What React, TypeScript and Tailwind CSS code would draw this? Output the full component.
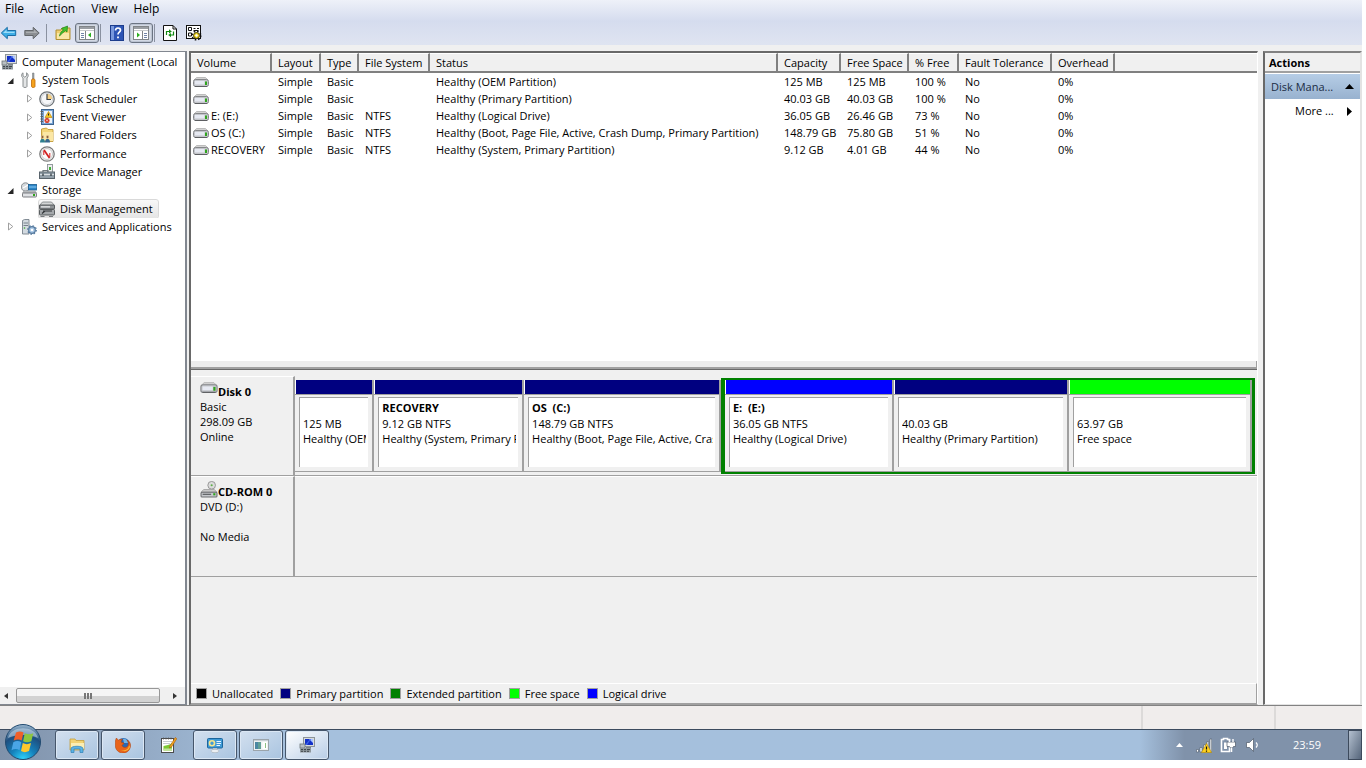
import type { ReactNode } from "react";

type IconName =
  | "computer" | "tools" | "clock" | "log" | "share" | "perf" | "device" | "storage" | "disk" | "services";

function Svg({ children, className = "h-4 w-4" }: { children: ReactNode; className?: string }) {
  return (
    <svg viewBox="0 0 16 16" className={`shrink-0 ${className}`} aria-hidden="true">
      {children}
    </svg>
  );
}

function ComputerIcon({ className }: { className?: string }) {
  return (
    <Svg className={className}>
      <rect x="4.5" y=".5" width="11" height="9" fill="#d8dcdf" stroke="#8d9499" />
      <rect x="6" y="2" width="8" height="6" fill="#1230c8" />
      <path d="M10 2h4v4z" fill="#a9c4ff" />
      <path d="M6 8l5-6h1L8 8z" fill="#3c62e8" />
      <rect x="7" y="10" width="5" height="1.5" fill="#7d858a" />
      <rect x="1" y="7" width="5" height="4" fill="#b9c0c4" stroke="#6d7478" strokeWidth=".8" />
      <rect x="1" y="11" width="11" height="4.5" fill="#8f989d" />
      <path d="M2 12.5h2M5 12.5h2M8 12.5h3M2 14.3h2M5 14.3h2M8 14.3h2" stroke="#3f474c" />
    </Svg>
  );
}

function DriveIcon({ className = "h-3 w-4" }: { className?: string }) {
  return (
    <svg viewBox="0 0 16 12" className={`shrink-0 ${className}`} aria-hidden="true">
      <path d="M3.5 1.5h9l2.500 2.500H1z" fill="#d3d3d3" stroke="#b0b0b0" strokeWidth=".8" />
      <rect x=".5" y="3.5" width="15" height="7" rx="2" fill="#c3c5ca" stroke="#85878a" />
      <path d="M2 5h9.500v3.500H2z" fill="#e6e9f2" />
      <rect x="12" y="5.5" width="2" height="3.500" fill="#2fa51c" />
      <path d="M2 10.500h12" stroke="#5d5f62" />
    </svg>
  );
}

function TreeIcon({ name }: { name: IconName }) {
  switch (name) {
    case "computer":
      return <ComputerIcon />;
    case "tools":
      return (
        <Svg>
          <path d="M2 .8v3l1.800 1.400L5.600 3.800V.8C7.500 1.800 7.800 4.500 6 6v8.500c0 1.300-4 1.300-4 0V6C0 4.500.3 1.800 2 .8z" fill="#e3e5e6" stroke="#7d8285" strokeWidth=".9" />
          <path d="M11.500 1h1.500v6h-1.500z" fill="#9ea4a8" stroke="#6c7275" strokeWidth=".5" />
          <path d="M10.500 8c0-1.500 3.500-1.500 3.500 0v6.500c0 1.300-3.500 1.300-3.500 0z" fill="#f4a21d" stroke="#c06a08" strokeWidth=".8" />
        </Svg>
      );
    case "clock":
      return (
        <Svg>
          <circle cx="8" cy="8" r="7.200" fill="#f6f7f9" stroke="#6f7479" strokeWidth="1.300" />
          <path d="M8 8V2.500A5.500 5.500 0 0 1 13.500 8z" fill="#f5cf83" />
          <circle cx="8" cy="8" r="5.600" fill="none" stroke="#c3c8cd" strokeWidth=".8" />
          <path d="M8 3v5.500h4" fill="none" stroke="#3c4146" strokeWidth="1.200" />
        </Svg>
      );
    case "log":
      return (
        <Svg>
          <rect x="2.500" y=".5" width="12" height="15" fill="#7aa5d6" stroke="#3e658f" />
          <rect x="5" y="2" width="8" height="12" fill="#eef4fa" />
          <path d="M1.500 2.500h2.500M1.500 5h2.500M1.500 7.500h2.500M1.500 10h2.500M1.500 12.500h2.500" stroke="#5c5c5c" />
          <path d="M9.500 2.500l3.500 6H6z" fill="#f8c41c" stroke="#b27c00" strokeWidth=".6" />
          <path d="M9.500 4.500v2" stroke="#222" />
          <circle cx="8" cy="11.500" r="2.500" fill="#d2301e" />
          <path d="M7 10.500l2 2M9 10.500l-2 2" stroke="#fff" strokeWidth=".7" />
        </Svg>
      );
    case "share":
      return (
        <Svg>
          <path d="M2.500 2l5-1 1.500 1.500h5v12h-11.500z" fill="#f4d67a" stroke="#c29a35" strokeWidth=".9" />
          <path d="M4 5h10v9H4z" fill="#fbe7a5" />
          <path d="M1 15.500c0-5 5-5 5 0z" fill="#2d7f8f" />
          <path d="M6 15.500c0-5 5-5 5 0z" fill="#35678e" />
          <circle cx="3.500" cy="10" r="1.400" fill="#8a5a35" stroke="#f7e2b0" strokeWidth=".5" />
          <circle cx="8.500" cy="10" r="1.400" fill="#8a5a35" stroke="#f7e2b0" strokeWidth=".5" />
        </Svg>
      );
    case "perf":
      return (
        <Svg>
          <circle cx="8" cy="8" r="7.200" fill="#fbfbfb" stroke="#7a7a7a" strokeWidth="1.300" />
          <circle cx="8" cy="8" r="5.500" fill="none" stroke="#bdbdbd" strokeWidth=".8" />
          <path d="M5 4l5.500 8" stroke="#d21f1f" strokeWidth="1.800" />
          <path d="M4.800 9V5M10.800 11V7" stroke="#d21f1f" strokeWidth="1" />
        </Svg>
      );
    case "device":
      return (
        <Svg>
          <rect x="8.500" y=".5" width="5" height="8" fill="#eceeee" stroke="#8a9094" strokeWidth=".9" />
          <rect x="10" y="3" width="2" height="3" fill="#3fae36" />
          <path d="M4 8V6.500h5V8" fill="none" stroke="#6e777d" strokeWidth="1.200" />
          <rect x=".5" y="8" width="15" height="6.500" fill="#93a0aa" stroke="#59646c" />
          <path d="M1 10.500h14" stroke="#d9dfe3" />
          <path d="M4 9.500v2.500M12 9.500v2.500" stroke="#3e484f" strokeWidth="1.400" />
        </Svg>
      );
    case "storage":
      return (
        <Svg>
          <circle cx="4.500" cy="5" r="4.200" fill="#d5d9dc" stroke="#7e8589" strokeWidth=".9" />
          <path d="M2 6l5-3" stroke="#fff" strokeWidth="1.200" />
          <rect x="7.500" y="2.500" width="8" height="5.500" fill="#2e86c8" stroke="#155a8e" strokeWidth=".8" />
          <path d="M8 5h7.500" stroke="#8ccbf2" />
          <path d="M3 9h11l1.500 2H1.500z" fill="#c8cbcd" stroke="#8d9194" strokeWidth=".6" />
          <rect x="1.500" y="11" width="14" height="4" rx=".8" fill="#e0e2e5" stroke="#6f7376" strokeWidth=".9" />
          <rect x="12" y="12" width="2" height="2" fill="#2fa51c" />
        </Svg>
      );
    case "disk":
      return (
        <Svg>
          <path d="M3.500 1h9L15.500 4.500H.5z" fill="#d3d5d6" stroke="#797d80" strokeWidth=".8" />
          <rect x=".5" y="4" width="15" height="4" rx=".6" fill="#8f9396" stroke="#4d5154" strokeWidth=".9" />
          <rect x="2" y="5.200" width="9" height="1.300" fill="#e6e8e9" />
          <rect x=".5" y="8.500" width="15" height="5.500" rx=".8" fill="#a4a8ab" stroke="#4d5154" strokeWidth=".9" />
          <path d="M4 10h9M3 12.500L6 10" stroke="#33373a" strokeWidth="1.200" />
          <path d="M1.500 15.500h4M10 15.500h4" stroke="#777b7e" />
        </Svg>
      );
    case "services":
      return (
        <Svg>
          <path d="M1.500 1.500l2-1h4.500v14.500h-6.500z" fill="#d3dae0" stroke="#77828b" strokeWidth=".9" />
          <path d="M2.500 4h4.500M2.500 6.500h4.500" stroke="#77828b" />
          <circle cx="3.500" cy="9" r=".8" fill="#38a32c" />
          <circle cx="11" cy="11" r="3.300" fill="#a8c6e4" stroke="#54799e" strokeWidth="1.200" />
          <circle cx="11" cy="11" r="4.300" fill="none" stroke="#54799e" strokeWidth="1.200" strokeDasharray="1.500 1.870" />
          <circle cx="11" cy="11" r="1.300" fill="#fff" />
        </Svg>
      );
  }
}

function Twisty({ state }: { state?: "open" | "closed" }) {
  return (
    <svg viewBox="0 0 8 9" className="h-[9px] w-2 shrink-0" aria-hidden="true">
      {state === "open" && <path d="M6.500 2v6h-6z" fill="#262626" />}
      {state === "closed" && <path d="M1.500 1v7L5.800 4.500z" fill="#fff" stroke="#a0a0a0" />}
    </svg>
  );
}

const TREE: { label: string; icon: IconName; level: 0 | 1 | 2; state?: "open" | "closed"; selected?: boolean }[] = [
  { label: "Computer Management (Local", icon: "computer", level: 0 },
  { label: "System Tools", icon: "tools", level: 1, state: "open" },
  { label: "Task Scheduler", icon: "clock", level: 2, state: "closed" },
  { label: "Event Viewer", icon: "log", level: 2, state: "closed" },
  { label: "Shared Folders", icon: "share", level: 2, state: "closed" },
  { label: "Performance", icon: "perf", level: 2, state: "closed" },
  { label: "Device Manager", icon: "device", level: 2 },
  { label: "Storage", icon: "storage", level: 1, state: "open" },
  { label: "Disk Management", icon: "disk", level: 2, selected: true },
  { label: "Services and Applications", icon: "services", level: 1, state: "closed" },
];

const INDENT = { 0: "pl-px", 1: "pl-[7px]", 2: "pl-[26px]" };

const COLUMNS = [
  { label: "Volume", width: "w-[81px]" },
  { label: "Layout", width: "w-[49px]" },
  { label: "Type", width: "w-[38px]" },
  { label: "File System", width: "w-[71px]" },
  { label: "Status", width: "w-[348px]" },
  { label: "Capacity", width: "w-[63px]" },
  { label: "Free Space", width: "w-[68px]" },
  { label: "% Free", width: "w-[50px]" },
  { label: "Fault Tolerance", width: "w-[93px]" },
  { label: "Overhead", width: "w-[63px]" },
];

const VOLUMES = [
  ["", "Simple", "Basic", "", "Healthy (OEM Partition)", "125 MB", "125 MB", "100 %", "No", "0%"],
  ["", "Simple", "Basic", "", "Healthy (Primary Partition)", "40.03 GB", "40.03 GB", "100 %", "No", "0%"],
  ["E: (E:)", "Simple", "Basic", "NTFS", "Healthy (Logical Drive)", "36.05 GB", "26.46 GB", "73 %", "No", "0%"],
  ["OS (C:)", "Simple", "Basic", "NTFS", "Healthy (Boot, Page File, Active, Crash Dump, Primary Partition)", "148.79 GB", "75.80 GB", "51 %", "No", "0%"],
  ["RECOVERY", "Simple", "Basic", "NTFS", "Healthy (System, Primary Partition)", "9.12 GB", "4.01 GB", "44 %", "No", "0%"],
];

const LEGEND = [
  { label: "Unallocated", color: "bg-black" },
  { label: "Primary partition", color: "bg-[#000080]" },
  { label: "Extended partition", color: "bg-[#008000]" },
  { label: "Free space", color: "bg-[#00ff00]" },
  { label: "Logical drive", color: "bg-[#0000ff]" },
];

function ToolSeparator() {
  return <span className="h-[18px] w-px bg-[#8a91a0]" />;
}

function PaneIcon({ side }: { side: "left" | "right" }) {
  return (
    <Svg>
      <rect x=".5" y="1.500" width="15" height="13" fill="#fff" stroke="#808488" />
      <path d="M1 3h14" stroke="#9a9ea3" strokeWidth="2" />
      <path d="M1 5.500h14" stroke="#c7cacd" />
      {side === "left" ? (
        <>
          <path d="M6.500 6v8" stroke="#808488" />
          <path d="M2 8.500h3M2 10.500h3M2 12.500h3" stroke="#7385a8" />
          <path d="M12 7.500v5L9 10z" fill="#2cae1f" />
        </>
      ) : (
        <>
          <path d="M9.500 6v8" stroke="#808488" />
          <path d="M11 8.500h3M11 10.500h3M11 12.500h3" stroke="#7385a8" />
          <path d="M4 7.500v5L7 10z" fill="#2cae1f" />
        </>
      )}
    </Svg>
  );
}

function Toolbar() {
  const pressed = "flex h-5 w-6 items-center justify-center rounded-[3px] border border-[#6b7482] bg-[#d3d9e4] shadow-[inset_0_0_0_1px_#bcc4d2]";
  return (
    <div className="flex h-6 shrink-0 items-center bg-linear-to-b from-[#d5dcee] to-[#dfe4f1]">
      <button aria-label="Back" className="w-[17px]">
        <Svg className="h-4 w-[17px]">
          <path d="M.8 8l6-5.700v3.200h8.400v5H6.800v3.200z" fill="#3eaee6" stroke="#1b6da5" />
          <path d="M2.500 8l3.500-3.300v2h8V8z" fill="#9ddcf8" />
        </Svg>
      </button>
      <button aria-label="Forward" className="ml-[7px] w-4">
        <Svg>
          <path d="M15.200 8l-6-5.700v3.200H.8v5h8.400v3.200z" fill="#8b8e92" stroke="#65686c" />
          <path d="M2 6.700h8v-2L13.500 8H2z" fill="#abaeb1" />
        </Svg>
      </button>
      <span className="ml-[6px] flex"><ToolSeparator /></span>
      <button aria-label="Up one level" className="ml-2">
        <Svg>
          <path d="M1 5h5l1-2h8v11.500H1z" fill="#efcf70" stroke="#b18f32" />
          <path d="M2 8h12v6H2z" fill="#f9e7a6" />
          <path d="M4.500 11c.5-3 2-5 4-6L6.500 3.500 12.500 1 12 7 10.300 5.800C8 7.500 6.500 9 4.500 11z" fill="#43c22c" stroke="#1d8414" strokeWidth=".7" />
        </Svg>
      </button>
      <button aria-label="Show or hide console tree" className={`ml-1 ${pressed}`}><PaneIcon side="left" /></button>
      <span className="ml-px flex"><ToolSeparator /></span>
      <button aria-label="Help" className="ml-2">
        <Svg>
          <rect x="1.500" y=".5" width="13" height="15" fill="#2d55b5" stroke="#1d3d8c" />
          <path d="M2 1h3v14H2z" fill="#7898dd" />
          <path d="M6.500 5.500c0-3.300 5-3.300 5-.3 0 2-2.500 2-2.500 4.300" fill="none" stroke="#fff" strokeWidth="1.700" />
          <path d="M8.100 11.500h1.800v1.800H8.100z" fill="#fff" />
        </Svg>
      </button>
      <button aria-label="Show or hide action pane" className={`ml-1 ${pressed}`}><PaneIcon side="right" /></button>
      <span className="ml-px flex"><ToolSeparator /></span>
      <button aria-label="Refresh" className="ml-[7px]">
        <Svg>
          <path d="M1.500.5h9.500l3.500 3.500v11.500h-13z" fill="#fff" stroke="#111" />
          <path d="M11 .5V4h3.500" fill="none" stroke="#111" />
          <path d="M4.500 10V6.500h3M11.500 6.500v3.500h-3" fill="none" stroke="#118a11" strokeWidth="1.200" />
          <path d="M7 4.300v4.200l2.800-2.100zM9 8v4.200l-2.800-2.100z" fill="#118a11" />
        </Svg>
      </button>
      <button aria-label="Settings" className="ml-2">
        <Svg>
          <rect x=".5" y=".5" width="14" height="13" fill="#fff" stroke="#111" />
          <path d="M2.500 2.500h3v3h-3zM2.500 8h3v3h-3z" fill="#fff" stroke="#111" />
          <path d="M7.500 3.500h2M11 3.500h2M7.500 5.500h5" stroke="#111" strokeWidth="1.200" />
          <circle cx="10.500" cy="10.500" r="3" fill="#e9cf1a" stroke="#4d4300" />
          <circle cx="10.500" cy="10.500" r="4.300" fill="none" stroke="#111" strokeWidth="1.500" strokeDasharray="1.600 1.780" />
          <circle cx="10.500" cy="10.500" r="1.200" fill="#fff" />
        </Svg>
      </button>
    </div>
  );
}

function ConsoleTree() {
  return (
    <nav aria-label="Console tree" className="flex w-[187px] shrink-0 flex-col border-t border-r-2 border-b border-[#828790] bg-white">
      <ul className="grid h-[184px] shrink-0 grid-rows-10 pt-px">
        {TREE.map((item) => (
          <li key={item.label} className={`flex items-center overflow-hidden whitespace-nowrap ${INDENT[item.level]}`}>
            {item.level > 0 && <Twisty state={item.state} />}
            <button
              className={`flex h-[18px] items-center gap-[5px] ${item.level === 0 ? "" : item.level === 1 ? "ml-[6px]" : "ml-[5px]"} ${
                item.selected ? "rounded-[2px] bg-linear-to-b from-[#f8f8f8] to-[#e5e5e5] pr-[5px] outline outline-[#d9d9d9]" : ""
              }`}
            >
              <TreeIcon name={item.icon} />
              {item.label}
            </button>
          </li>
        ))}
      </ul>
      <div className="grow" />
      <div className="flex h-[17px] items-center bg-[#f0f0f0]">
        <button aria-label="Scroll left" className="flex w-4 justify-center pr-1">
          <svg viewBox="0 0 4 6" className="h-[6px] w-1"><path d="M4 0v6L0 3z" fill="#333" /></svg>
        </button>
        <div className="flex h-[15px] w-[144px] items-center justify-center gap-px rounded-[2px] border border-[#979797] bg-linear-to-b from-[#f5f5f5] from-50% to-[#d2d2d2] to-50%">
          <span className="h-[6px] w-[2px] bg-[#777]" />
          <span className="h-[6px] w-[2px] bg-[#777]" />
          <span className="h-[6px] w-[2px] bg-[#777]" />
        </div>
        <button aria-label="Scroll right" className="flex grow justify-center pl-1">
          <svg viewBox="0 0 4 6" className="h-[6px] w-1"><path d="M0 0v6l4-3z" fill="#333" /></svg>
        </button>
      </div>
    </nav>
  );
}

function VolumeList() {
  return (
    <div className="h-[308px] shrink-0 overflow-hidden bg-white">
      <table className="w-full table-fixed border-separate border-spacing-0">
        <thead>
          <tr className="h-5 bg-[#f0f0f0]">
            {COLUMNS.map((c) => (
              <th key={c.label} className={`${c.width} border-t border-r-2 border-b-2 border-t-white border-r-[#808080] border-b-[#808080] p-0 pl-[6px] text-left align-middle font-normal whitespace-nowrap`}>
                {c.label}
              </th>
            ))}
            <th aria-label="Filler" className="border-t border-b-2 border-t-white border-b-[#808080] p-0" />
          </tr>
        </thead>
        <tbody>
          {VOLUMES.map((row, i) => (
            <tr key={i} className="h-[17px]">
              {row.map((cell, j) => (
                <td key={j} className={`p-0 leading-[17px] whitespace-nowrap ${j === 0 ? "pl-[2px]" : "pl-[6px]"}`}>
                  {j === 0 ? (
                    <span className="flex items-center gap-[2px]"><DriveIcon />{cell}</span>
                  ) : cell}
                </td>
              ))}
              <td className="p-0" />
            </tr>
          ))}
        </tbody>
      </table>
    </div>
  );
}

function Partition({ grow, color, name, size, status }: { grow: string; color: string; name?: string; size: string; status: string }) {
  return (
    <div className={`flex min-w-0 basis-0 flex-col border-r-2 border-b border-[#a0a0a0] ${grow}`}>
      <div className={`h-[14px] shrink-0 border-l border-white ${color}`} />
      <div className="flex grow border-t border-[#a0a0a0] px-1 pt-[2px] pb-1">
        <div className="min-w-0 grow border-t border-l border-[#a0a0a0] bg-white pt-[2px] pr-[2px] pl-[3px] leading-[15px] whitespace-nowrap">
          <div className="overflow-hidden">
            <div className="h-4 font-bold whitespace-pre">{name}</div>
            <div>{size}</div>
            <div>{status}</div>
          </div>
        </div>
      </div>
    </div>
  );
}

function DiskHeader({ icon, title, lines }: { icon: ReactNode; title: string; lines: string[] }) {
  return (
    <div className="w-[104px] shrink-0 border-t border-r-2 border-b border-t-white border-r-[#a0a0a0] border-b-[#a0a0a0] pl-[9px] leading-[15px]">
      <div className="flex h-[22px] items-end font-bold">
        <span className="flex h-[18px] items-start">{icon}</span>
        {title}
      </div>
      {lines.map((line, i) => (
        <div key={i} className="h-[15px]">{line}</div>
      ))}
    </div>
  );
}

function DiskPane() {
  return (
    <div className="flex grow flex-col border-t border-[#696969] bg-[#f0f0f0] pt-[6px]">
      <div className="flex h-[100px]">
        <DiskHeader icon={<DriveIcon className="h-[13px] w-[18px]" />} title="Disk 0" lines={["Basic", "298.09 GB", "Online"]} />
        <div className="flex min-w-0 grow border-b border-[#a0a0a0] pt-[2px] pr-[2px] pb-px">
          <div className="flex min-w-0 grow-[429] basis-0 py-[2px]">
            <Partition grow="grow-[79]" color="bg-[#000080]" size="125 MB" status="Healthy (OEM Partition)" />
            <Partition grow="grow-[151]" color="bg-[#000080]" name="RECOVERY" size="9.12 GB NTFS" status="Healthy (System, Primary Partition)" />
            <Partition grow="grow-[199]" color="bg-[#000080]" name="OS  (C:)" size="148.79 GB NTFS" status="Healthy (Boot, Page File, Active, Crash Dump, Primary Partition)" />
          </div>
          <div className="flex min-w-0 grow-[531] basis-0 border-y-2 border-r-[3px] border-l-4 border-[#008000]">
            <Partition grow="grow-[168]" color="bg-[#0000ff]" name="E:  (E:)" size="36.05 GB NTFS" status="Healthy (Logical Drive)" />
            <Partition grow="grow-[174]" color="bg-[#000080]" size="40.03 GB" status="Healthy (Primary Partition)" />
            <Partition grow="grow-[182]" color="bg-[#00ff00]" size="63.97 GB" status="Free space" />
          </div>
        </div>
      </div>
      <div className="flex h-[101px]">
        <DiskHeader
          icon={
            <Svg className="mb-auto h-[17px] w-[18px]">
              <circle cx="10.500" cy="4" r="3.600" fill="#dcdcdc" stroke="#8b8b8b" strokeWidth=".8" />
              <circle cx="10.500" cy="4" r="1" fill="#5fae4a" />
              <path d="M3 8h10l2.500 2.500H.5z" fill="#c9c9c9" stroke="#9a9a9a" strokeWidth=".7" />
              <rect x=".5" y="10.500" width="15" height="4.500" rx="1" fill="#c6c8cc" stroke="#6c6e71" />
              <path d="M2 12.500h8" stroke="#4e5053" />
              <rect x="12" y="11.500" width="2" height="2" fill="#2fa51c" />
            </Svg>
          }
          title="CD-ROM 0"
          lines={["DVD (D:)", "", "No Media"]}
        />
        <div className="grow border-y border-t-white border-b-[#a0a0a0]" />
      </div>
      <div className="grow" />
      <ul className="flex h-[21px] items-center gap-[7px] border-t border-r border-b border-t-white border-r-[#a0a0a0] border-b-[#a0a0a0] pl-[5px]">
        {LEGEND.map((item) => (
          <li key={item.label} className="flex items-center gap-[5px]">
            <span className={`h-[11px] w-[11px] border border-[#a0a0a0] ${item.color}`} />
            {item.label}
          </li>
        ))}
      </ul>
    </div>
  );
}

function ActionsPane() {
  return (
    <aside className="ml-[5px] w-[99px] shrink-0 border-t-2 border-r-2 border-b border-l-2 border-t-[#828282] border-r-[#e3e3e3] border-b-[#e3e3e3] border-l-[#696969] bg-white">
      <h2 className="h-5 border-b-2 border-[#a0a0a0] bg-[#f0f0f0] pl-1 leading-[20px] font-bold">Actions</h2>
      <button className="mt-px flex h-[25px] w-full items-center justify-between bg-linear-to-b from-[#b6cde6] to-[#98b2cf] px-[6px] text-[#1b2c44]">
        Disk Mana...
        <svg viewBox="0 0 9 5" className="h-[5px] w-[9px]"><path d="M4.500 0L9 5H0z" fill="#000" /></svg>
      </button>
      <button className="flex h-6 w-full items-center justify-between pr-2 pl-[30px]">
        More ...
        <svg viewBox="0 0 5 9" className="h-[9px] w-[5px]"><path d="M0 0v9l5-4.500z" fill="#000" /></svg>
      </button>
    </aside>
  );
}

function TaskButton({ label, active, children }: { label: string; active?: boolean; children: ReactNode }) {
  return (
    <button
      aria-label={label}
      className={`flex h-[30px] w-11 items-center justify-center rounded-[3px] border border-[#46566b] shadow-[inset_0_0_0_1px_#dbe7f4] ${
        active ? "bg-linear-to-br from-white to-[#b8cde6]" : "bg-linear-to-br from-[#d3e0ef] to-[#a9c4e0]"
      }`}
    >
      {children}
    </button>
  );
}

function Taskbar() {
  return (
    <footer className="relative flex h-[31px] shrink-0 items-center border-t border-[#3c4b5e] bg-linear-to-r from-[#8092aa] to-[#a5c0dd] to-20% pl-[55px]">
      <button aria-label="Start" className="absolute bottom-0 left-1">
        <svg viewBox="0 0 38 36" className="h-9 w-[38px]" aria-hidden="true">
          <defs>
            <radialGradient id="orb" cx=".5" cy="1" r="1">
              <stop offset="0" stopColor="#2fd7ff" />
              <stop offset=".35" stopColor="#1583bd" />
              <stop offset=".7" stopColor="#1e4f80" />
              <stop offset="1" stopColor="#9db9d0" />
            </radialGradient>
          </defs>
          <circle cx="19" cy="18" r="17.500" fill="url(#orb)" stroke="#214a70" />
          <path d="M4 14C7 1 31 1 34 14c-8-4-22-4-30 0z" fill="#d8e8f3" opacity=".5" />
          <path d="M12 8.500c3-1.500 5-1.500 7.500 0l-1.800 8c-2.500-1.500-5-1.500-8 0z" fill="#f0602a" />
          <path d="M20.800 9.200c3 1.500 5.500 1.500 8.500 0l-2 8c-3 1.500-5.500 1.500-8.200 0z" fill="#8dc63f" />
          <path d="M9.300 18.200c3-1.500 5.500-1.500 8 0l-1.800 8c-2.500-1.500-5-1.500-8 0z" fill="#4aa5e6" />
          <path d="M18.800 19c3 1.500 5.200 1.500 8.200 0l-2 8c-3 1.500-5.500 1.500-8 0z" fill="#fcc72e" />
        </svg>
      </button>
      <div className="flex items-center gap-[2px]">
        <TaskButton label="Windows Explorer">
          <Svg>
            <path d="M1 2h5l1 1.500h8V13H1z" fill="#f2d373" stroke="#c59f3c" strokeWidth=".8" />
            <path d="M2 6h13v6H2z" fill="#fbeeb4" />
            <path d="M2 15.500v-4c0-3 12-3 12 0v4h-3v-3.500H5v3.500z" fill="#5cb3e4" stroke="#2f81b8" strokeWidth=".7" />
          </Svg>
        </TaskButton>
        <TaskButton label="Firefox">
          <Svg>
            <circle cx="8.500" cy="7.500" r="6.500" fill="#2b68b4" />
            <path d="M8 2c2-.8 5 1 5 4L9 6z" fill="#6fb4e8" />
            <path d="M.6 3l.8-2 2 2.200C5 2 6.500 2 7.500 2.500 6 3.500 6 4.500 6.500 5.500l2.500.5c0 1.500-2 1.500-2 2.500 1 2.500 5 2.500 6 0 .8-2 .3-4-1-5.500 3 1.500 4 4 3.400 7C14.500 14 11.500 16 8 16 3.500 16 .3 12.500.3 8.500.3 6.500.2 4.500.6 3z" fill="#e8641b" stroke="#a83c0a" strokeWidth=".5" />
            <path d="M14 8c0 4-4 6.500-8 5 3 2.300 8 1 9-3z" fill="#f9b733" />
          </Svg>
        </TaskButton>
        <button aria-label="Notepad++" className="flex h-[30px] w-11 items-center justify-center">
          <Svg>
            <rect x=".5" y="1.500" width="12" height="14" fill="#fff" stroke="#4b4b4b" />
            <path d="M2.500 9c3-.5 6-1 8.500-3v7.500H2.500z" fill="#7cc832" />
            <path d="M2.500 11.500H11v2H2.500z" fill="#c3e39a" />
            <path d="M2 4.500h9M2 6.500h7" stroke="#c6cbd0" />
            <path d="M2.500.5v2M5 .5v2M7.500.5v2M10 .5v2" stroke="#555" strokeWidth=".8" />
            <path d="M14.300.5l1.500 1.200L10.500 10l-2 1 .5-2.200z" fill="#f3a620" stroke="#a65a10" strokeWidth=".6" />
          </Svg>
        </button>
        <TaskButton label="Control Panel">
          <Svg>
            <rect x=".5" y="1.500" width="15" height="9.500" rx="1" fill="#3f9ad6" stroke="#1a659c" />
            <circle cx="5" cy="6.200" r="2.500" fill="none" stroke="#f6e58a" strokeWidth="1.600" />
            <path d="M9.500 4.500H14M9.500 6.500H14M9.500 8.500H13" stroke="#e6f4ff" />
            <path d="M6 11h4v2H6z" fill="#b9c3cc" />
            <ellipse cx="8" cy="14" rx="4" ry="1.700" fill="#eceff2" stroke="#9aa4ad" strokeWidth=".5" />
          </Svg>
        </TaskButton>
        <TaskButton label="Application">
          <Svg>
            <rect x=".5" y="2.500" width="15" height="11" fill="#eef1f3" stroke="#9ba4ab" />
            <path d="M1 3.500h14" stroke="#c8d0d6" />
            <rect x="2" y="5" width="6" height="7" fill="#5f9f96" />
            <path d="M2 5h3v7H2z" fill="#4b87a3" />
            <path d="M9.500 5h4.500v7H9.500z" fill="#fff" />
            <path d="M12.500 6v5" stroke="#8dbf85" />
          </Svg>
        </TaskButton>
        <TaskButton label="Computer Management" active><ComputerIcon /></TaskButton>
      </div>
      <div className="ml-auto flex h-full items-center bg-linear-to-r from-[#a5c0dd] to-[#8092aa] to-20% pl-9 text-white">
        <button aria-label="Show hidden icons" className="flex">
          <svg viewBox="0 0 7 4" className="h-1 w-[7px]"><path d="M3.500 0L7 4H0z" fill="#fff" /></svg>
        </button>
        <span className="ml-[13px] flex gap-2">
          <Svg>
            <path d="M.5 12.500h2V15h-2zM4 10.500h2V15H4zM7.500 8h2v7h-2zM11 4.500h1.700V15H11zM14 2h1.700v13H14z" fill="#fff" stroke="#4c5867" strokeWidth=".6" />
            <path d="M10.500 6.500L15.500 15.500h-10z" fill="#ffd21f" stroke="#c08f00" strokeWidth=".6" />
            <path d="M10.500 9.500v3M10.500 13.500v1.200" stroke="#111" strokeWidth="1.200" />
          </Svg>
          <Svg>
            <path d="M1.500 2.500h2v-1h4v1h2v12h-8z" fill="none" stroke="#fff" strokeWidth="1.600" />
            <path d="M4 5.500h3v6.500H4z" fill="#fff" />
            <path d="M7 5h8.500v4.500h-2l-1 1.500h-2L9.500 9.500H7z" fill="#fff" stroke="#4c5867" strokeWidth=".7" />
            <path d="M9.500 2v3M13 2v3" stroke="#fff" strokeWidth="1.400" />
            <path d="M11.500 11v4" stroke="#fff" strokeWidth="1.500" />
          </Svg>
          <Svg>
            <path d="M2.500 5.500h3l4-4v13l-4-4h-3z" fill="#fff" stroke="#4c5867" strokeWidth=".7" />
            <path d="M12 5.500c1.500 1.500 1.500 3.500 0 5" fill="none" stroke="#fff" strokeWidth="1.200" />
          </Svg>
        </span>
        <span className="ml-[33px] w-[55px]">23:59</span>
        <button aria-label="Show desktop" className="h-full w-[14px] border border-[#3d4a5c] bg-linear-to-br from-[#b4c0cf] to-[#56667b]" />
      </div>
    </footer>
  );
}

export default function App() {
  return (
    <div className="h-screen bg-white pr-1 pb-2 font-['Open_Sans','Noto_Sans',sans-serif] text-[11px] leading-[16px] text-black">
      <div className="flex h-full flex-col bg-[#f0f0f0]">
        <header className="flex h-[21px] shrink-0 items-center gap-4 bg-linear-to-b from-[#eef1f9] to-[#d5dcee] pb-[3px] pl-[5px] text-xs">
          <button>File</button>
          <button>Action</button>
          <button>View</button>
          <button>Help</button>
        </header>
        <Toolbar />
        <main className="mt-[6px] flex min-h-0 grow">
          <ConsoleTree />
          <section className="ml-[2px] flex min-w-0 grow flex-col border-t-2 border-r border-b border-l-2 border-t-[#696969] border-r-white border-b-[#a0a0a0] border-l-[#696969]">
            <VolumeList />
            <div className="h-2 shrink-0 border-r border-b-2 border-[#a0a0a0] bg-[#ececec]" />
            <DiskPane />
          </section>
          <ActionsPane />
        </main>
        <div className="flex h-6 shrink-0 border-t border-[#828282] bg-[#f0edec]">
          <div className="grow border-r-2 border-[#dcdad9]" />
          <div className="w-[133px] border-r-2 border-[#dcdad9]" />
          <div className="w-[86px]" />
        </div>
        <Taskbar />
      </div>
    </div>
  );
}
